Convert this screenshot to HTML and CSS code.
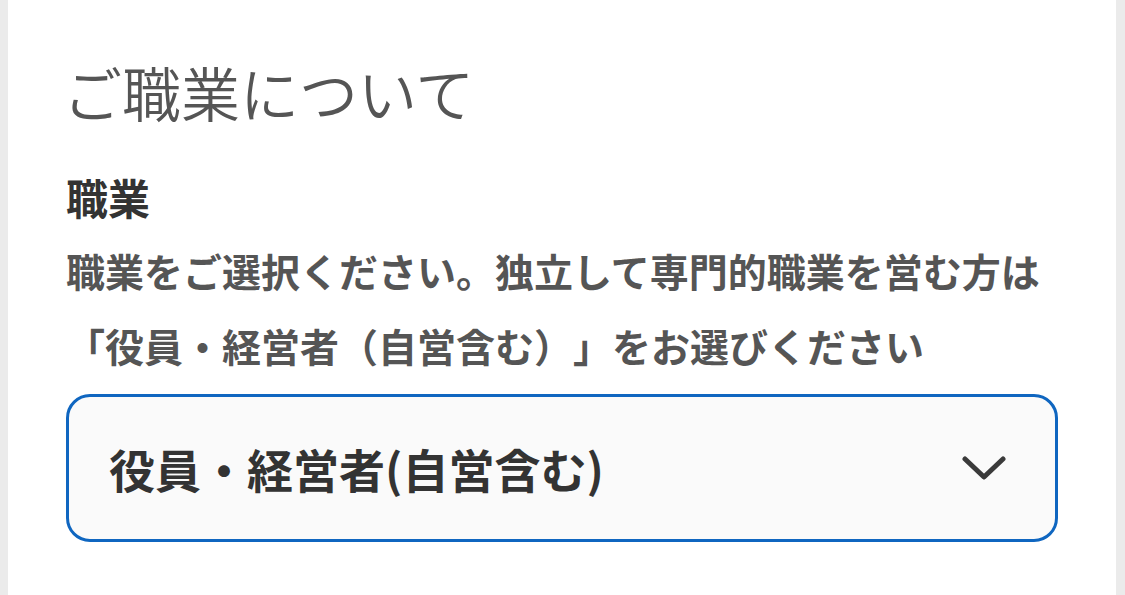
FILE: index.html
```html
<!DOCTYPE html>
<html lang="ja">
<head>
<meta charset="utf-8">
<title>ご職業について</title>
<link rel="stylesheet" href="styles.css">
</head>
<body>
<main class="panel">
  <h1 class="title">ご職業について</h1>
  <section class="field">
    <h2 class="label">職業</h2>
    <p class="desc">職業をご選択ください。独立して専門的職業を営む方は「役員・経営者（自営含む）」をお選びください</p>
    <div class="select">
      <span class="select-value">役員・経営者(自営含む)</span>
      <svg class="chevron" width="44" height="24" viewBox="0 0 44 24" aria-hidden="true">
        <path d="M3 3 L22 21 L41 3" fill="none" stroke="#3a3a3a" stroke-width="5" stroke-linecap="round" stroke-linejoin="round"/>
      </svg>
    </div>
  </section>
</main>
</body>
</html>
```

FILE: styles.css
```css
html, body {
  margin: 0;
  padding: 0;
  height: 100%;
}
body {
  background: #ebebeb;
  font-family: "Noto Sans CJK JP", "Noto Sans", sans-serif;
  overflow: hidden;
}
.panel {
  margin: 0 9px 0 8px;
  background: #ffffff;
  min-height: 595px;
  padding: 52px 58px 0;
  box-sizing: border-box;
}
.title {
  margin: 0 0 0 -3px;
  font-size: 59px;
  line-height: 80px;
  font-weight: 350;
  color: #555555;
  letter-spacing: 0;
}
.field {
  margin-top: 35px;
}
.label {
  margin: 0;
  font-size: 42px;
  line-height: 60px;
  font-weight: 700;
  color: #333333;
}
.desc {
  margin: 6px 0 0;
  font-size: 39px;
  line-height: 75px;
  font-weight: 700;
  color: #555555;
  text-spacing-trim: space-all;
}
.select {
  margin-top: 11px;
  height: 148px;
  box-sizing: border-box;
  border: 3px solid #0f66c0;
  border-radius: 24px;
  background: #fafafa;
  display: flex;
  align-items: center;
  justify-content: space-between;
  padding: 0 49px 0 40px;
}
.select-value {
  font-size: 46px;
  font-weight: 700;
  color: #333333;
}
.chevron {
  display: block;
  flex: none;
}
```
